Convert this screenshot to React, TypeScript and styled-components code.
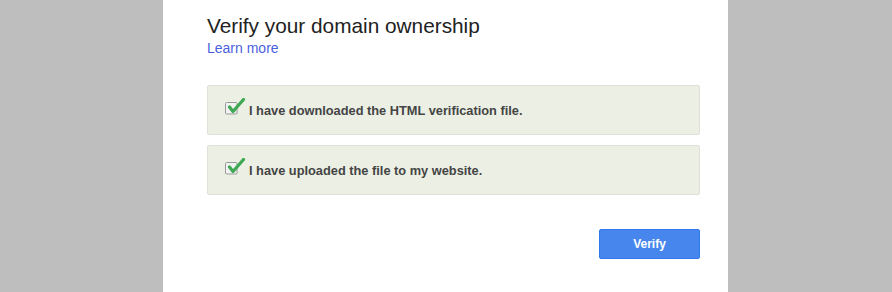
import React from "react"
import styled, { createGlobalStyle } from "styled-components"

const BodyStyles = createGlobalStyle`
  html, body {
    margin: 0;
    padding: 0;
  }
  body {
    font-family: "Liberation Sans", Arial, sans-serif;
    background-color: #bebebe;
  }
`

const Page = styled.div`
  height: 292px;
  padding-left: 163px;
`

const Panel = styled.div`
  width: 565px;
  height: 292px;
  box-sizing: border-box;
  background: #fff;
  padding: 14px 28px 0 44px;
  display: flex;
  flex-direction: column;
`

const Title = styled.h1`
  margin: 0;
  font-size: 20.8px;
  line-height: 24px;
  font-weight: normal;
  color: #222;
`

const LearnMore = styled.a`
  margin-top: 2px;
  font-size: 14px;
  line-height: 16px;
  color: #4b5fe0;
  text-decoration: none;
  align-self: flex-start;
`

const Steps = styled.div`
  margin-top: 29px;
  display: flex;
  flex-direction: column;
  gap: 10px;
`

const Step = styled.div`
  height: 50px;
  box-sizing: border-box;
  border: 1px solid #dfe1d8;
  border-radius: 2px;
  background: #ecf0e4;
  display: flex;
  align-items: center;
  padding-left: 16px;
`

const StepText = styled.span`
  margin-left: 3px;
  margin-top: 1px;
  font-size: 12.8px;
  font-weight: bold;
  color: #444;
`

const Actions = styled.div`
  margin-top: 34px;
  display: flex;
  justify-content: flex-end;
`

const Button = styled.button`
  width: 101px;
  height: 30px;
  border: 1px solid #3079ed;
  border-radius: 2px;
  background: #4787ed;
  color: #fff;
  font-family: "Liberation Sans", Arial, sans-serif;
  font-size: 12px;
  font-weight: bold;
  cursor: pointer;
`

const CheckIcon = () => (
  <svg width="22" height="24" viewBox="0 0 22 24">
    <rect x="1.5" y="4.5" width="11.5" height="11.5" rx="1" fill="#f2f2f2" stroke="#9a9a9a" />
    <path d="M5.5 9 L9 13.5 L19.5 1.5" fill="none" stroke="#3ea853" strokeWidth="3.2" strokeLinecap="round" strokeLinejoin="round" />
  </svg>
)

const App = () => (
  <Page>
    <BodyStyles />
    <Panel>
      <Title>Verify your domain ownership</Title>
      <LearnMore href="#">Learn more</LearnMore>
      <Steps>
        <Step>
          <CheckIcon />
          <StepText>I have downloaded the HTML verification file.</StepText>
        </Step>
        <Step>
          <CheckIcon />
          <StepText>I have uploaded the file to my website.</StepText>
        </Step>
      </Steps>
      <Actions>
        <Button>Verify</Button>
      </Actions>
    </Panel>
  </Page>
)

export default App
